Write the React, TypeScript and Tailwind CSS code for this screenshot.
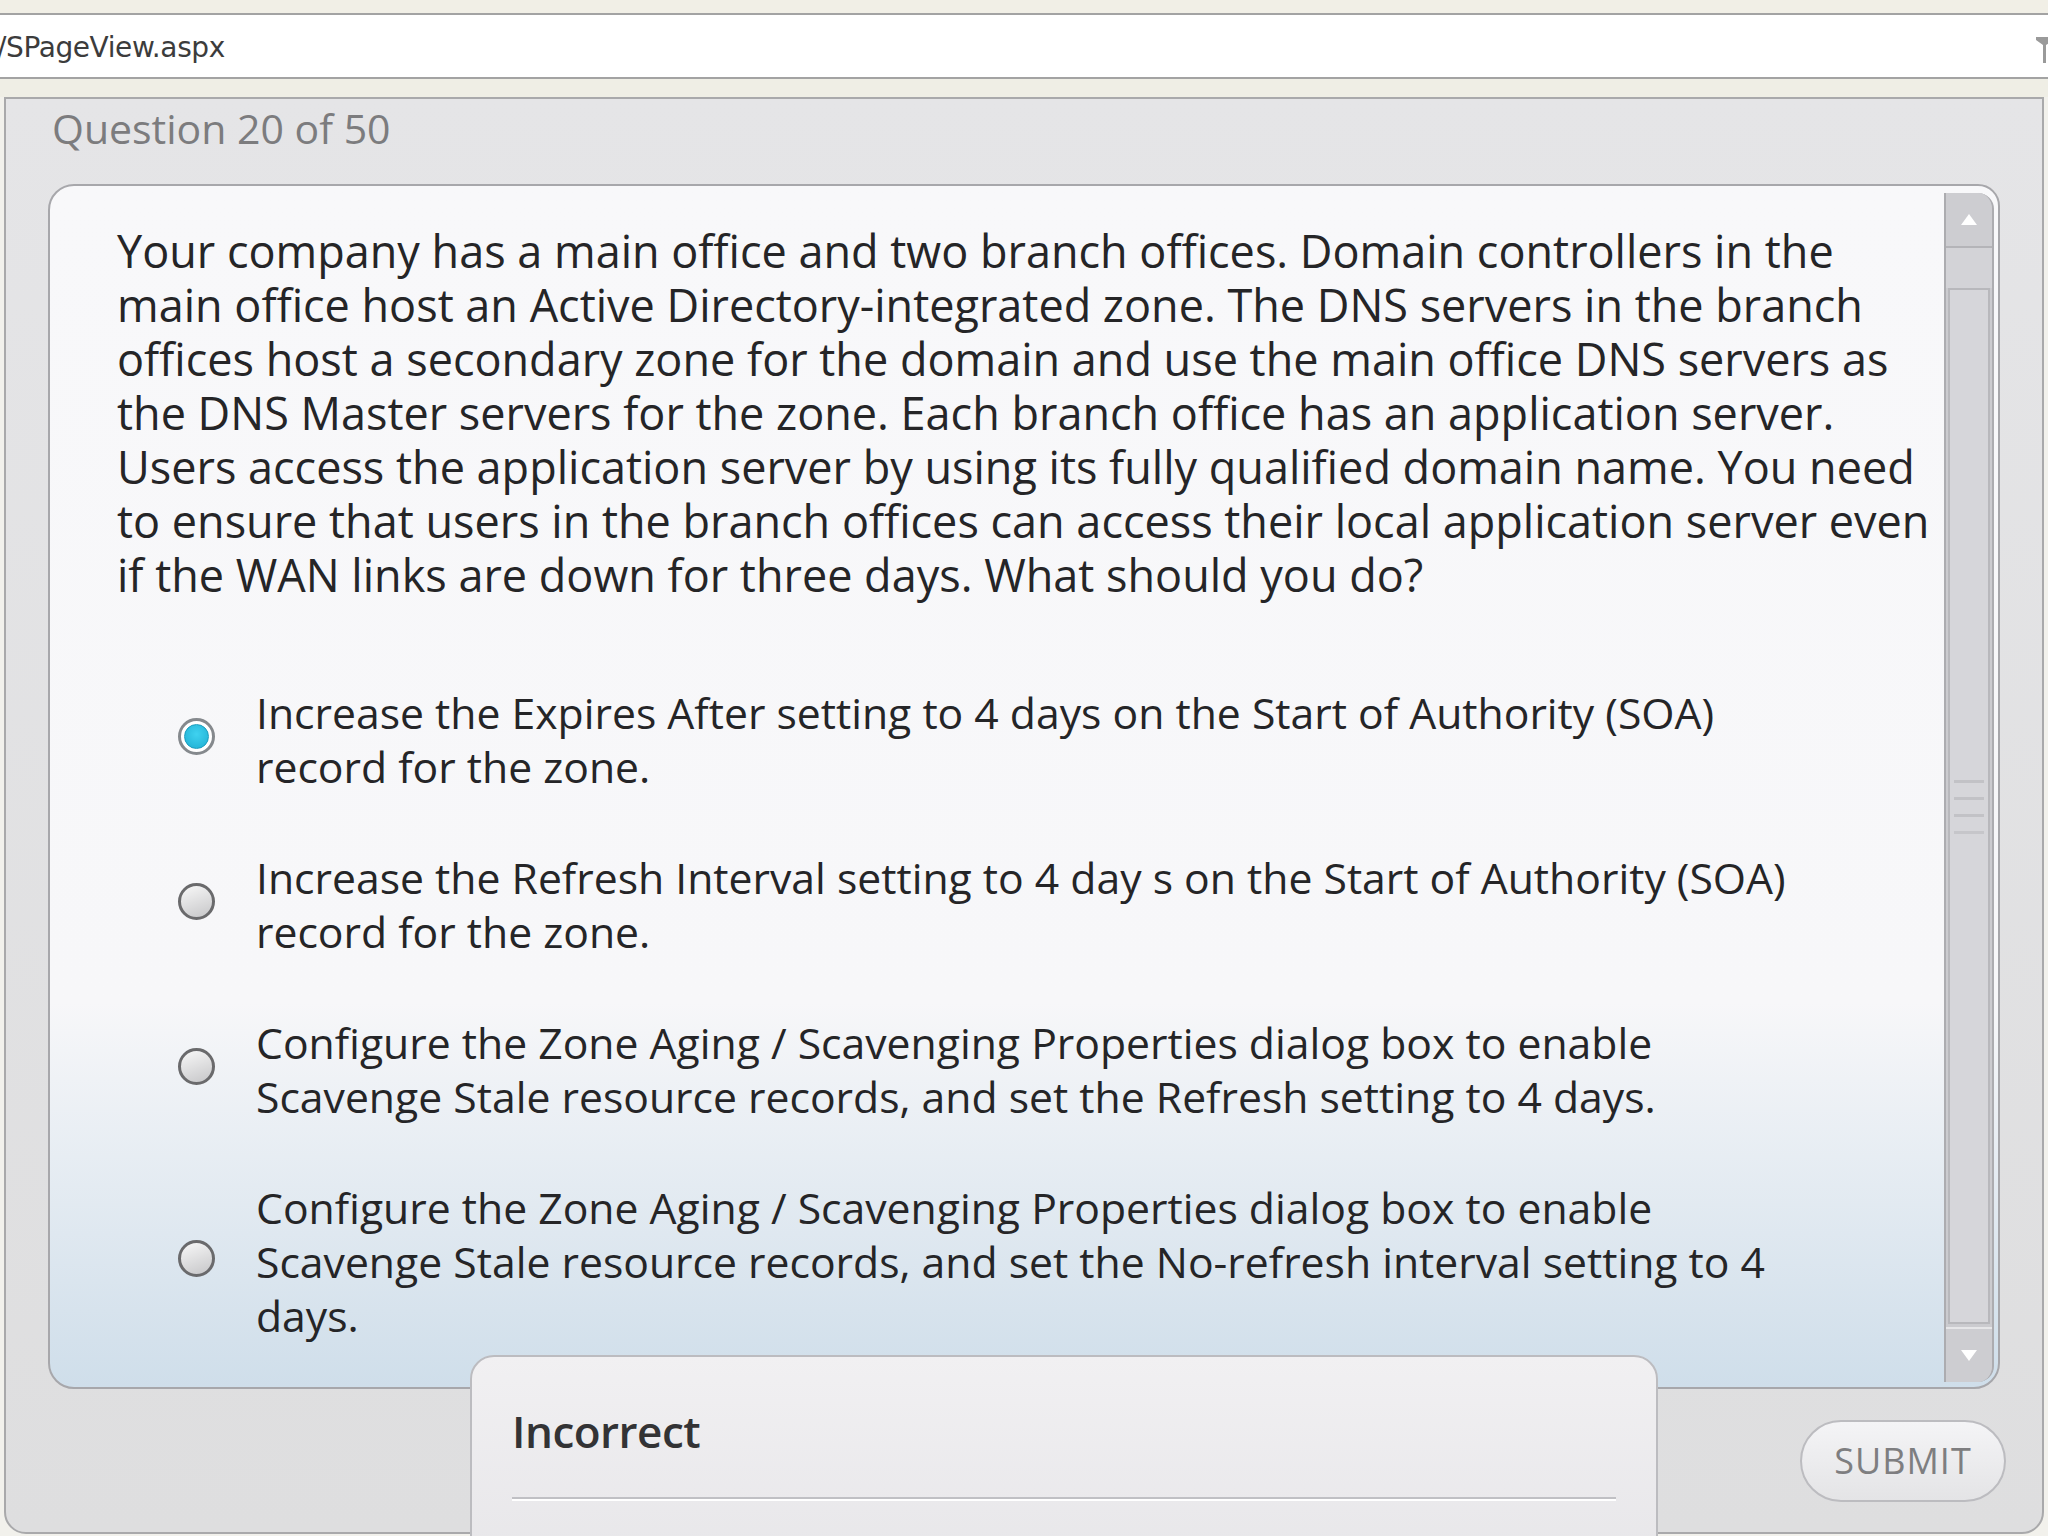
import React from "react";

const questionLines = [
  "Your company has a main office and two branch offices. Domain controllers in the",
  "main office host an Active Directory-integrated zone. The DNS servers in the branch",
  "offices host a secondary zone for the domain and use the main office DNS servers as",
  "the DNS Master servers for the zone. Each branch office has an application server.",
  "Users access the application server by using its fully qualified domain name. You need",
  "to ensure that users in the branch offices can access their local application server even",
  "if the WAN links are down for three days. What should you do?",
];

const options = [
  {
    lines: [
      "Increase the Expires After setting to 4 days on the Start of Authority (SOA)",
      "record for the zone.",
    ],
    selected: true,
  },
  {
    lines: [
      "Increase the Refresh Interval setting to 4 day s on the Start of Authority (SOA)",
      "record for the zone.",
    ],
    selected: false,
  },
  {
    lines: [
      "Configure the Zone Aging / Scavenging Properties dialog box to enable",
      "Scavenge Stale resource records, and set the Refresh setting to 4 days.",
    ],
    selected: false,
  },
  {
    lines: [
      "Configure the Zone Aging / Scavenging Properties dialog box to enable",
      "Scavenge Stale resource records, and set the No-refresh interval setting to 4",
      "days.",
    ],
    selected: false,
  },
];

function Radio({ selected }: { selected: boolean }) {
  if (selected) {
    return (
      <div className="w-[37px] h-[37px] mb-[8px] rounded-full border-[3px] border-[#85898d] bg-white flex items-center justify-center shrink-0">
        <div className="w-[25px] h-[25px] rounded-full bg-[radial-gradient(circle_at_50%_40%,#3fd2f0,#1eaed2)] border border-[#1a9cbd]" />
      </div>
    );
  }
  return (
    <div className="w-[37px] h-[37px] mb-[8px] rounded-full border-[3px] border-[#6a6a6c] bg-[linear-gradient(160deg,#f8f8f8,#c6c6c8)] shrink-0" />
  );
}

function Scrollbar() {
  return (
    <div className="w-[50px] mt-[7px] mb-[5px] mr-[4px] flex flex-col border-x-2 border-[#acacb0] bg-[#cbcbcf] rounded-tr-[16px] rounded-br-[16px] overflow-hidden">
      <div className="h-[55px] flex items-center justify-center bg-[#cdcdd1] border-b-2 border-[#b4b4b8] rounded-tr-[14px]">
        <svg width="16" height="11" viewBox="0 0 16 11">
          <path d="M8 0 L16 11 L0 11 Z" fill="#ffffff" />
        </svg>
      </div>
      <div className="h-[40px] bg-[#d3d3d7]" />
      <div className="flex-1 mx-[2px] border-2 border-[#b8b8bc] bg-[#d6d6da] flex flex-col items-center pt-[490px] gap-[14px]">
        <div className="w-[30px] h-[3px] bg-[#c2c2c6]" />
        <div className="w-[30px] h-[3px] bg-[#c2c2c6]" />
        <div className="w-[30px] h-[3px] bg-[#c2c2c6]" />
        <div className="w-[30px] h-[3px] bg-[#c6c6ca]" />
      </div>
      <div className="h-[55px] mt-[3px] flex items-center justify-center bg-[#cdcdd1] border-t-2 border-[#e6e6e8] rounded-br-[14px]">
        <svg width="16" height="11" viewBox="0 0 16 11">
          <path d="M0 0 L16 0 L8 11 Z" fill="#ffffff" />
        </svg>
      </div>
    </div>
  );
}

export default function App() {
  return (
    <div className="relative w-[2048px] h-[1536px] overflow-hidden bg-[#f2f1ec] font-['Open_Sans',sans-serif]">
      {/* browser chrome */}
      <div className="h-[13px] bg-[#f1efe6]" />
      <div className="h-[66px] bg-white border-y-2 border-[#a3a3a3] flex items-center justify-between">
        <span className="-ml-[3px] mt-[4px] text-[28px] text-[#3c3c3c] font-['DejaVu_Sans',sans-serif] tracking-[-0.4px]">
          /SPageView.aspx
        </span>
        <svg width="16" height="30" viewBox="0 0 16 30" className="mr-[-4px] mt-[8px]">
          <path d="M0 2 L16 2 L16 6 L10 10 L10 28 L7 28 L7 10 L0 5 Z" fill="#9a9a9a" />
        </svg>
      </div>
      <div className="h-[18px] bg-[#efeee5]" />

      {/* quiz panel */}
      <div className="ml-[4px] w-[2040px] h-[1437px] border-2 border-[#a9a9ab] rounded-b-[22px] bg-[linear-gradient(to_bottom,#e5e5e7,#dededf)]">
        <div className="pt-[7px] pl-[46px] h-[85px] text-[41px] leading-[44px] text-[#7c7c7e]">
          Question 20 of 50
        </div>

        <div className="ml-[42px] w-[1952px] h-[1205px] rounded-[26px] rounded-tr-[22px] border-2 border-[#a7a7ab] bg-[linear-gradient(to_bottom,#f8f8fa_0%,#f7f7f9_68%,#cfdeea_100%)] flex">
          <div className="flex-1 pl-[67px] pt-[38px] text-[#252527]">
            <div className="text-[45px] leading-[54px] whitespace-nowrap">
              {questionLines.map((l, i) => (
                <div key={i}>{l}</div>
              ))}
            </div>

            <div className="mt-[84px] flex flex-col gap-[57px]">
              {options.map((o, i) => (
                <div key={i} className="flex items-center pl-[61px] gap-[41px]">
                  <Radio selected={o.selected} />
                  <div className="text-[42.7px] leading-[54px] whitespace-nowrap">
                    {o.lines.map((l, j) => (
                      <div key={j}>{l}</div>
                    ))}
                  </div>
                </div>
              ))}
            </div>
          </div>
          <Scrollbar />
        </div>

        <div className="flex justify-end pr-[36px] mt-[31px]">
          <button className="w-[206px] h-[82px] rounded-full border-2 border-[#bcbcc0] bg-[linear-gradient(to_bottom,#f4f4f6,#e4e4e6)] text-[36px] text-[#7e7e80] tracking-[1px]">
            SUBMIT
          </button>
        </div>
      </div>

      {/* feedback popup */}
      <div className="absolute left-[470px] top-[1355px] w-[1188px] h-[220px] rounded-t-[24px] border-2 border-[#bcbcc0] bg-[linear-gradient(to_bottom,#f1f0f2,#e7e6e9)] pt-[49px] px-[40px]">
        <div className="text-[44px] leading-[50px] font-semibold text-[#333335] tracking-[-0.5px]">Incorrect</div>
        <div className="mt-[41px] h-[4px] border-t-2 border-[#c0c0c4] border-b-2 border-b-white" />
      </div>
    </div>
  );
}
